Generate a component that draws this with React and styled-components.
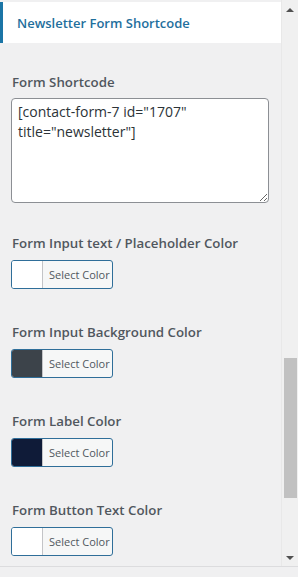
import React from "react";
import styled, { createGlobalStyle } from "styled-components";

const Global = createGlobalStyle`
  html, body { margin: 0; padding: 0; }
  body {
    background: #f0f0f1;
    font-family: "Open Sans", "Noto Sans", sans-serif;
    width: 298px;
    height: 577px;
    overflow: hidden;
  }
`;

const Frame = styled.div`
  display: flex;
  height: 567px;
  border-bottom: 1px solid #dcdcde;
  box-sizing: border-box;
`;

const Main = styled.div`
  flex: 1;
  display: flex;
  flex-direction: column;
  padding-top: 2px;
  overflow: hidden;
`;

const SectionHeader = styled.div`
  flex-shrink: 0;
  height: 41px;
  background: #ffffff;
  border-left: 3px solid #1b75a6;
  display: flex;
  align-items: center;
  padding-left: 14px;
  font-size: 13px;
  font-weight: 600;
  color: #1f6f9d;
`;

const Content = styled.div`
  flex-shrink: 0;
  padding: 29px 12px 0 11px;
  display: flex;
  flex-direction: column;
`;

const Control = styled.div`
  flex-shrink: 0;
  display: flex;
  flex-direction: column;
  gap: ${(p) => p.$gap || 7}px;
  margin-bottom: ${(p) => p.$after || 33}px;
`;

const Label = styled.div`
  font-size: 13.3px;
  line-height: 20px;
  font-weight: 600;
  color: #50575e;
  padding-left: 1px;
  white-space: nowrap;
`;

const Area = styled.textarea`
  flex-shrink: 0;
  width: 258px;
  height: 105px;
  box-sizing: border-box;
  border: 1px solid #8c8f94;
  border-radius: 4px;
  background: #fff;
  padding: 3px 6px;
  font-family: inherit;
  font-size: 14px;
  line-height: 20px;
  color: #2c3338;
  margin: 0;
  outline: none;
`;

const ColorButton = styled.button`
  flex-shrink: 0;
  display: flex;
  align-items: stretch;
  width: 102px;
  height: 29px;
  padding: 0;
  margin: 0;
  border: 1px solid #2f6e99;
  border-radius: 3px;
  background: #f6f7f7;
  overflow: hidden;
  cursor: pointer;
`;

const Swatch = styled.span`
  width: 30px;
  background: ${(p) => p.$color};
  border-right: 1px solid #c3c4c7;
`;

const ButtonText = styled.span`
  flex: 1;
  display: flex;
  align-items: center;
  padding-left: 6px;
  font-family: "Open Sans", "Noto Sans", sans-serif;
  font-size: 11px;
  color: #50575e;
`;

const ScrollBar = styled.div`
  width: 17px;
  background: #f0f0f0;
  border-left: 1px solid #e8e8e8;
  box-sizing: border-box;
  display: flex;
  flex-direction: column;
  align-items: center;
`;

const Arrow = styled.div`
  flex-shrink: 0;
  width: 0;
  height: 0;
  border-left: 4px solid transparent;
  border-right: 4px solid transparent;
  ${(p) =>
    p.$down
      ? "border-top: 4px solid #505050;"
      : "border-bottom: 4px solid #505050;"}
  margin-top: ${(p) => p.$mt}px;
`;

const Thumb = styled.div`
  flex-shrink: 0;
  width: 13px;
  height: 140px;
  background: #c1c1c1;
  margin-top: 346px;
`;

const controls = [
  { label: "Form Input text / Placeholder Color", color: "#ffffff" },
  { label: "Form Input Background Color", color: "#3c434a" },
  { label: "Form Label Color", color: "#0f1b38" },
  { label: "Form Button Text Color", color: "#ffffff" },
];

export default function App() {
  return (
    <>
      <Global />
      <Frame>
        <Main>
          <SectionHeader>Newsletter Form Shortcode</SectionHeader>
          <Content>
            <Control $gap={6} $after={30}>
              <Label>Form Shortcode</Label>
              <Area
                readOnly
                value={'[contact-form-7 id="1707" title="newsletter"]'}
              />
            </Control>
            {controls.map((c) => (
              <Control key={c.label}>
                <Label>{c.label}</Label>
                <ColorButton>
                  <Swatch $color={c.color} />
                  <ButtonText>Select Color</ButtonText>
                </ColorButton>
              </Control>
            ))}
          </Content>
        </Main>
        <ScrollBar>
          <Arrow $mt={8} />
          <Thumb />
          <Arrow $down $mt={58} />
        </ScrollBar>
      </Frame>
    </>
  );
}
